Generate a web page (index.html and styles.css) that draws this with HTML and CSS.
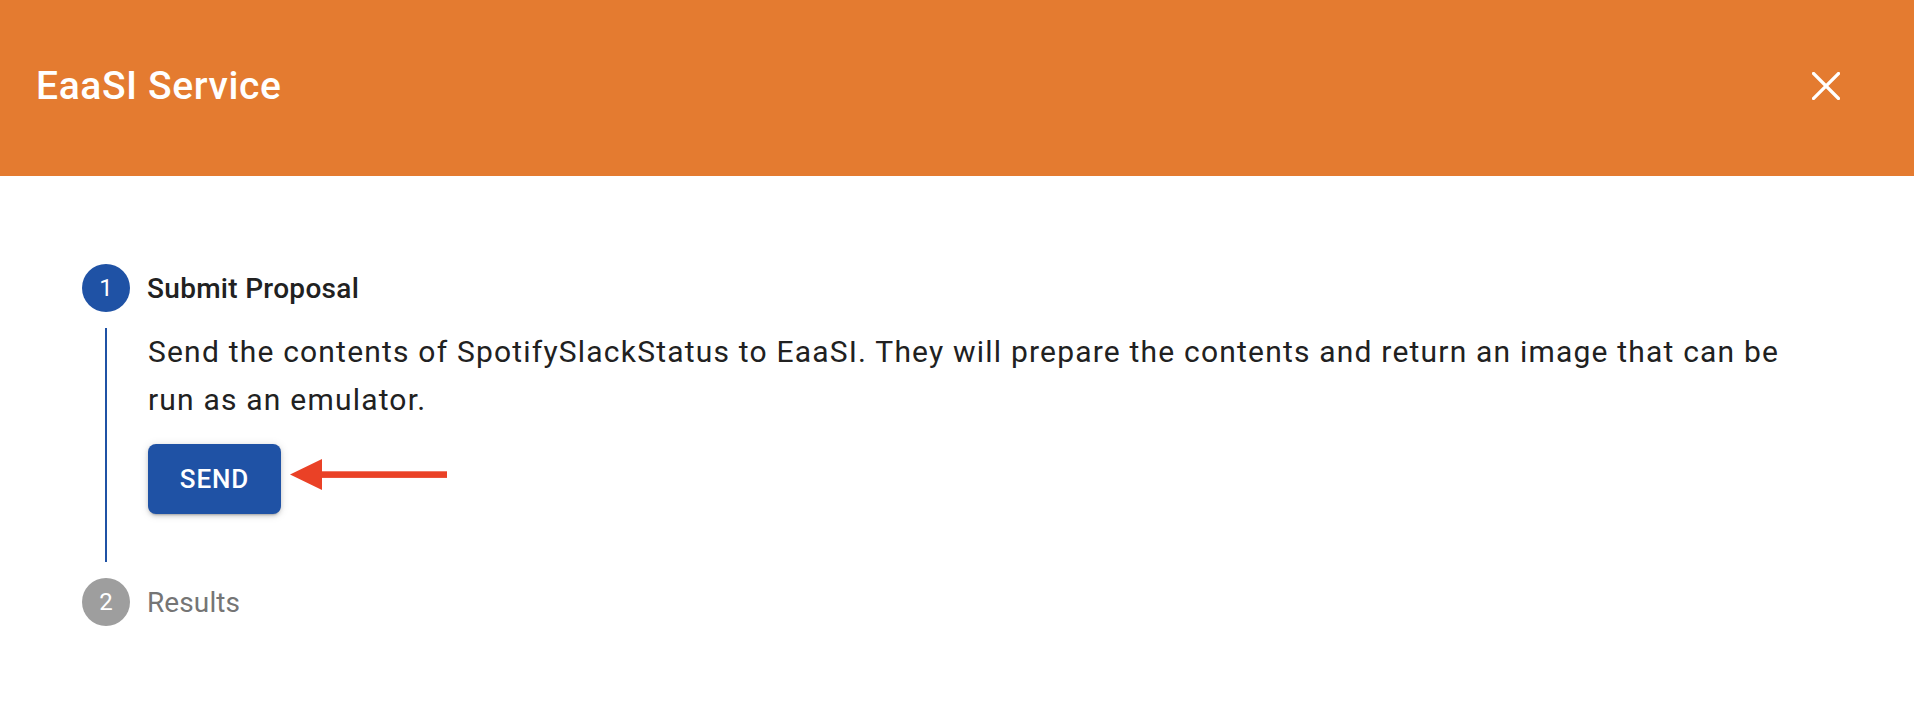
FILE: index.html
```html
<!DOCTYPE html>
<html>
<head>
<meta charset="utf-8">
<link rel="stylesheet" href="styles.css">
</head>
<body>
<div class="dialog">
  <header class="toolbar">
    <div class="toolbar-title">EaaSI Service</div>
    <button class="close-btn" aria-label="close">
      <svg width="28" height="28" viewBox="0 0 28 28"><path d="M1.5 1.5 L26.5 26.5 M26.5 1.5 L1.5 26.5" stroke="#fff" stroke-width="3.2" stroke-linecap="square"/></svg>
    </button>
  </header>
  <main class="stepper">
    <div class="step-header">
      <span class="step-num active">1</span>
      <span class="step-label">Submit Proposal</span>
    </div>
    <div class="step-content">
      <p class="step-text">Send the contents of SpotifySlackStatus to EaaSI. They will prepare the contents and return an image that can be run as an emulator.</p>
      <div class="btn-wrap">
        <button class="send-btn">SEND</button>
        <svg class="arrow" width="158" height="32" viewBox="0 0 158 32"><polygon points="0,15.5 32,0 32,31" fill="#ea4126"/><rect x="30" y="12.3" width="127" height="6.6" fill="#ea4126"/></svg>
      </div>
    </div>
    <div class="step-header">
      <span class="step-num inactive">2</span>
      <span class="step-label muted">Results</span>
    </div>
  </main>
</div>
</body>
</html>
```
FILE: styles.css
```css
html, body {
  margin: 0;
  padding: 0;
  background: #fff;
  font-family: Roboto, "Liberation Sans", sans-serif;
  color: #212121;
}
.dialog {
  width: 1914px;
  height: 728px;
  overflow: hidden;
}
.toolbar {
  height: 176px;
  background: #e47b30;
  display: flex;
  align-items: center;
  justify-content: space-between;
  padding: 0 74px 0 36px;
  box-sizing: border-box;
}
.toolbar-title {
  color: #fff;
  font-size: 39px;
  font-weight: 500;
  letter-spacing: 0.6px;
  margin-top: -4px;
}
.close-btn {
  background: none;
  border: none;
  padding: 0;
  width: 28px;
  height: 28px;
  display: flex;
  margin-top: -4px;
  cursor: pointer;
}
.stepper {
  padding: 88px 0 0 82px;
}
.step-header {
  display: flex;
  align-items: center;
  gap: 17px;
  height: 48px;
}
.step-num {
  width: 48px;
  height: 48px;
  border-radius: 50%;
  display: flex;
  align-items: center;
  justify-content: center;
  color: #fff;
  font-size: 24px;
}
.step-num.active { background: #1f52a5; }
.step-num.inactive { background: #9e9e9e; }
.step-label {
  font-size: 28px;
  font-weight: 500;
  letter-spacing: 0.3px;
  color: #212121;
}
.step-label.muted {
  font-weight: 400;
  letter-spacing: 0.1px;
  color: #757575;
}
.step-content {
  margin: 16px 0 16px 23px;
  border-left: 2px solid #1f52a5;
  padding: 0 0 48px 41px;
}
.step-text {
  margin: 0;
  font-size: 30px;
  line-height: 48px;
  letter-spacing: 1.2px;
  max-width: 1640px;
  color: #212121;
}
.btn-wrap {
  position: relative;
  margin-top: 20px;
  height: 70px;
}
.send-btn {
  width: 133px;
  height: 70px;
  background: #1f52a5;
  color: #fff;
  border: none;
  border-radius: 8px;
  font-family: Roboto, "Liberation Sans", sans-serif;
  font-size: 26px;
  font-weight: 500;
  letter-spacing: 0.9px;
  box-shadow: 0 3px 2px -2px rgba(0,0,0,.2), 0 2px 4px 0 rgba(0,0,0,.14), 0 1px 10px 0 rgba(0,0,0,.12);
}
.arrow {
  position: absolute;
  left: 142px;
  top: 15px;
}
```
